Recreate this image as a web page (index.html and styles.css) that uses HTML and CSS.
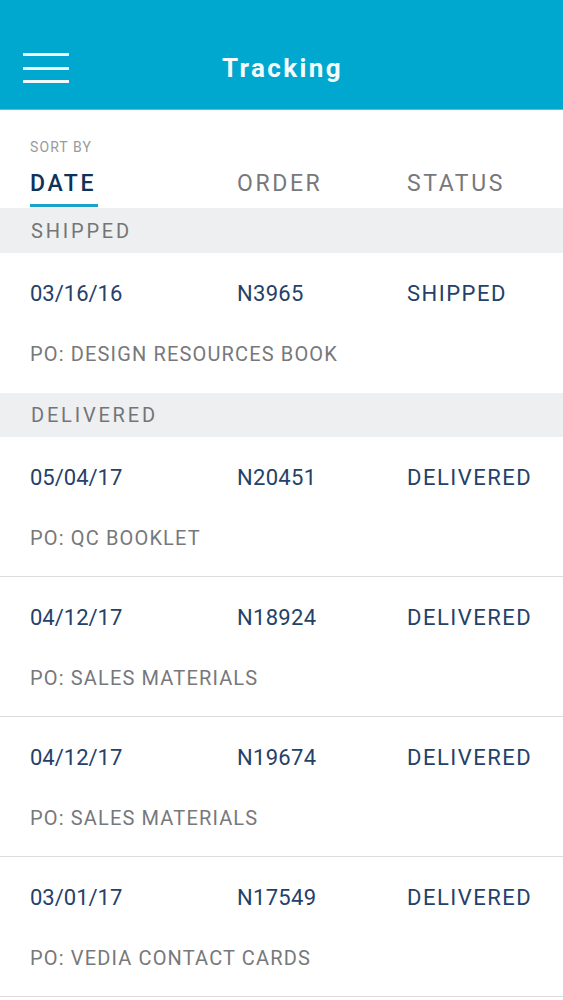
FILE: index.html
```html
<!DOCTYPE html>
<html>
<head>
<meta charset="utf-8">
<link rel="stylesheet" href="styles.css">
</head>
<body>
<header class="topbar">
  <div class="menu" aria-label="Menu">
    <span></span><span></span><span></span>
  </div>
  <h1 class="title">Tracking</h1>
</header>
<section class="sort">
  <div class="sort-label">SORT BY</div>
  <div class="tabs">
    <div class="tab c1 active">DATE</div>
    <div class="tab c2">ORDER</div>
    <div class="tab c3">STATUS</div>
  </div>
</section>
<div class="group">SHIPPED</div>
<div class="row first">
  <div class="line"><span class="c1">03/16/16</span><span class="c2">N3965</span><span class="c3">SHIPPED</span></div>
  <div class="po">PO: DESIGN RESOURCES BOOK</div>
</div>
<div class="group second">DELIVERED</div>
<div class="row">
  <div class="line"><span class="c1">05/04/17</span><span class="c2">N20451</span><span class="c3">DELIVERED</span></div>
  <div class="po">PO: QC BOOKLET</div>
</div>
<div class="row">
  <div class="line"><span class="c1">04/12/17</span><span class="c2">N18924</span><span class="c3">DELIVERED</span></div>
  <div class="po">PO: SALES MATERIALS</div>
</div>
<div class="row">
  <div class="line"><span class="c1">04/12/17</span><span class="c2">N19674</span><span class="c3">DELIVERED</span></div>
  <div class="po">PO: SALES MATERIALS</div>
</div>
<div class="row">
  <div class="line"><span class="c1">03/01/17</span><span class="c2">N17549</span><span class="c3">DELIVERED</span></div>
  <div class="po">PO: VEDIA CONTACT CARDS</div>
</div>
</body>
</html>
```
FILE: styles.css
```css
* { box-sizing: border-box; }
html, body { margin: 0; padding: 0; background: #fff; }
body { font-family: "Roboto", "Liberation Sans", sans-serif; width: 563px; overflow: hidden; }

.topbar {
  height: 110px;
  background: #00a7ce;
  border-bottom: 1px solid #4fc3df;
  display: flex;
  align-items: center;
  justify-content: center;
  position: relative;
  padding-top: 26px;
}
.menu {
  position: absolute;
  left: 23px;
  top: 53px;
  width: 46px;
  display: flex;
  flex-direction: column;
  gap: 10.5px;
}
.menu span { display: block; height: 3px; background: #eefafd; }
.title {
  margin: 0 0 0 2px;
  color: #f4fbfd;
  font-size: 26px;
  font-weight: 700;
  letter-spacing: 2.4px;
  line-height: 30px;
}

.sort { padding: 29px 0 0 30px; height: 98px; }
.sort-label { font-size: 14px; color: #999a9c; letter-spacing: 1.1px; line-height: 16px; }
.tabs { display: flex; margin-top: 15px; }
.tab {
  font-size: 23px;
  letter-spacing: 2.6px;
  color: #77787b;
  line-height: 28px;
  position: relative;
}
.tab.active { color: #0f3358; font-weight: 500; }
.tab.active::after {
  content: "";
  position: absolute;
  left: 0;
  width: 68px;
  top: 34px;
  height: 3px;
  background: #1aa2c9;
}
.c1 { width: 207px; flex: none; }
.c2 { width: 170px; flex: none; }
.c3 { flex: 1; }

.group {
  height: 45px;
  background: #eeeff1;
  color: #747578;
  font-size: 20px;
  letter-spacing: 2.8px;
  padding-left: 31px;
  display: flex;
  align-items: center;
}
.group.second { height: 44px; }

.row {
  height: 140px;
  padding: 27px 0 0 30px;
  border-bottom: 1px solid #dcdcde;
}
.row.first { border-bottom: none; }
.line { display: flex; font-size: 22px; line-height: 28px; color: #24416a; }
.line .c1 { letter-spacing: 0; }
.line .c2 { letter-spacing: 0.3px; }
.line .c3 { letter-spacing: 1.5px; }
.po {
  margin-top: 33px;
  font-size: 20px;
  line-height: 26px;
  color: #77787b;
  letter-spacing: 1.15px;
}
```
